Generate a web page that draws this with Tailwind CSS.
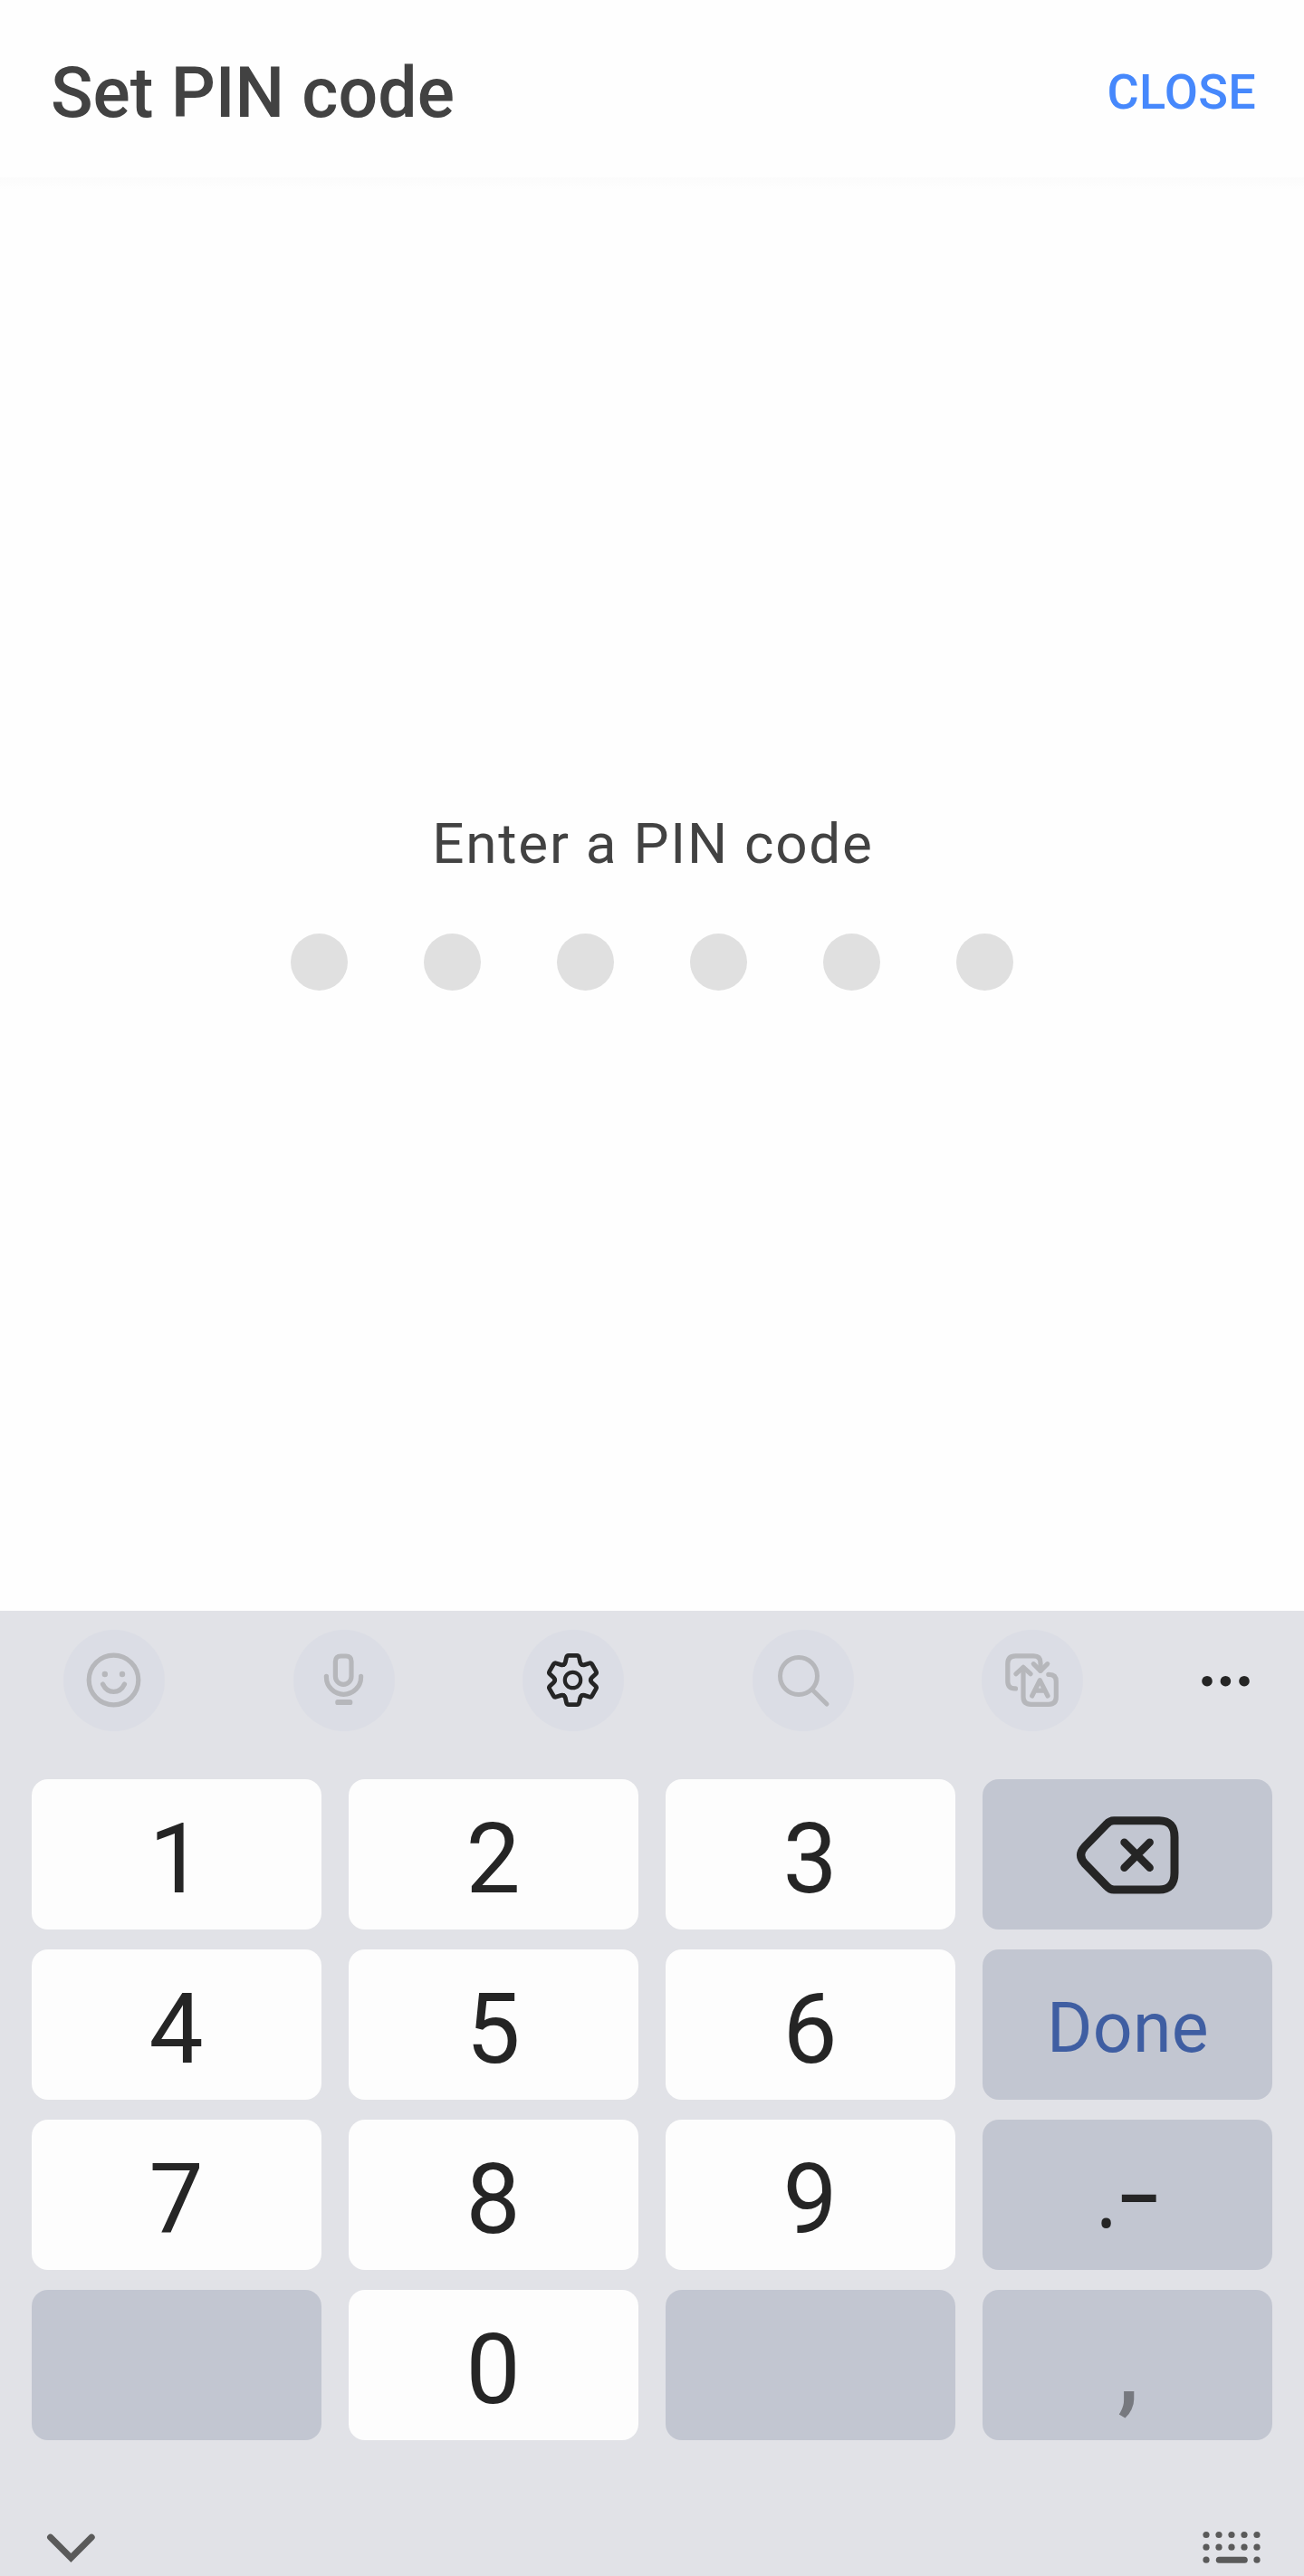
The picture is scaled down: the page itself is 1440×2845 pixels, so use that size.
<!DOCTYPE html>
<html lang="en">
<head>
  <meta charset="UTF-8">
  <meta name="viewport" content="width=device-width, initial-scale=1.0">
  <title>Set PIN code</title>
  <script src="https://cdn.jsdelivr.net/npm/@tailwindcss/browser@4"></script>
</head>
<body class="bg-[#fefefe] font-[Roboto,sans-serif] text-[#424242]">

  <div class="w-[1440px] h-[2845px] flex flex-col overflow-hidden">

    <!-- Header -->
    <header class="h-[196px] shrink-0 flex items-center justify-between pl-[56px] pr-[53px]">
      <h1 class="text-[77px] leading-none font-medium pt-[10px]">Set PIN code</h1>
      <button class="text-[54px] leading-none font-medium tracking-[0.3px] text-[#4688fc] pt-[7px]">CLOSE</button>
    </header>

    <!-- PIN entry -->
    <main class="h-[1583px] shrink-0 flex flex-col items-center pt-[705px] bg-[linear-gradient(#fbfbfb,#fefefe_14px)]">
      <p class="text-[62px] leading-none tracking-[1.75px] pl-[2px]">Enter a PIN code</p>
      <div class="flex gap-[84px] mt-[68px]">
        <span class="size-[63px] rounded-full bg-[#e0e0e0]"></span>
        <span class="size-[63px] rounded-full bg-[#e0e0e0]"></span>
        <span class="size-[63px] rounded-full bg-[#e0e0e0]"></span>
        <span class="size-[63px] rounded-full bg-[#e0e0e0]"></span>
        <span class="size-[63px] rounded-full bg-[#e0e0e0]"></span>
        <span class="size-[63px] rounded-full bg-[#e0e0e0]"></span>
      </div>
    </main>

    <!-- Keyboard -->
    <section class="flex-1 flex flex-col bg-[#e1e2e7] text-[#252525]">

      <!-- Toolbar -->
      <div class="h-[186px] shrink-0 flex items-start justify-between pt-[21px] pl-[70px] pr-[31px]">
        <div class="flex gap-[141.6px]">
          <svg class="size-[112px] rounded-full bg-[#dbdde5] text-[#b6b7bb]" viewBox="0 0 112 112" fill="none" stroke="currentColor" stroke-width="5.2" stroke-linecap="round">
            <circle cx="55.5" cy="55.5" r="27.3"/>
            <circle cx="45.8" cy="49" r="3.2" fill="currentColor" stroke="none"/>
            <circle cx="65" cy="49" r="3.2" fill="currentColor" stroke="none"/>
            <path d="M43.5 60Q47.5 68.3 55.5 68.3T67.5 60"/>
          </svg>
          <svg class="size-[112px] rounded-full bg-[#dbdde5] text-[#b6b7bb]" viewBox="0 0 112 112" fill="none" stroke="currentColor" stroke-width="5.2" stroke-linecap="round">
            <path d="M46.4 35Q46.4 29 52.4 29H58Q64 29 64 35V51.5A8.8 8.8 0 0 1 46.4 51.5Z"/>
            <path d="M36.4 51.3V52.2A19.1 19.1 0 0 0 74.6 52.2V51.3"/>
            <rect x="46.3" y="77" width="19" height="6" rx="2.6" fill="currentColor" stroke="none"/>
          </svg>
          <svg class="size-[112px] rounded-full bg-[#dbdde5]" viewBox="0 0 112 112" fill="none" stroke="currentColor" stroke-width="4.8" stroke-linecap="round">
            <defs>
              <path id="tooth" d="M-9.9 -17.1Q-8.6 -17.9 -8.2 -19.6L-7 -25Q-6.5 -27.1 -4.5 -27.1H4.5Q6.5 -27.1 7 -25L8.2 -19.6Q8.6 -17.9 9.9 -17.1"/>
            </defs>
            <g transform="translate(55.5 55.5)">
              <circle r="8.7" stroke-width="4.2"/>
              <use href="#tooth"/>
              <use href="#tooth" transform="rotate(60)"/>
              <use href="#tooth" transform="rotate(120)"/>
              <use href="#tooth" transform="rotate(180)"/>
              <use href="#tooth" transform="rotate(240)"/>
              <use href="#tooth" transform="rotate(300)"/>
            </g>
          </svg>
          <svg class="size-[112px] rounded-full bg-[#dbdde5] text-[#b6b7bb]" viewBox="0 0 112 112" fill="none" stroke="currentColor" stroke-width="5" stroke-linecap="round">
            <circle cx="51" cy="51" r="20.5"/>
            <path d="M66.3 66.5L82 82"/>
          </svg>
          <svg class="size-[112px] rounded-full bg-[#dbdde5] text-[#b6b7bb]" viewBox="0 0 112 112" fill="none" stroke="currentColor" stroke-width="5.2" stroke-linecap="round" stroke-linejoin="round">
            <path d="M37.5 64.9H36.5Q28.8 64.9 28.8 57V37.5Q28.8 28.9 37.5 28.9H57.5Q65 28.9 65 36.5V45"/>
            <path d="M57.3 37.7L65 45.3L72.7 37.7"/>
            <path d="M73.8 49.3H74.5Q82.3 49.3 82.3 57V74Q82.3 82.3 74 82.3H54.5Q46 82.3 46 74V42"/>
            <path d="M38 48.7L46 41.3L54 48.7"/>
            <path d="M55.7 73L64.3 55.6L73 73M59 67.2H69.6"/>
          </svg>
        </div>
        <svg class="size-[112px]" viewBox="0 0 112 112" fill="currentColor">
          <circle cx="36" cy="56.7" r="5.8"/>
          <circle cx="56.4" cy="56.7" r="5.8"/>
          <circle cx="77" cy="56.7" r="5.8"/>
        </svg>
      </div>

      <!-- Number pad -->
      <div class="grid grid-cols-4 auto-rows-[166px] gap-x-[30px] gap-y-[22px] px-[35px] text-[107px] leading-none">
        <button class="flex items-center justify-center pt-[10px] pr-[1px] rounded-[18px] bg-[#fdfdfd]">1</button>
        <button class="flex items-center justify-center pt-[10px] pr-[1px] rounded-[18px] bg-[#fdfdfd]">2</button>
        <button class="flex items-center justify-center pt-[10px] pr-[1px] rounded-[18px] bg-[#fdfdfd]">3</button>
        <button class="flex items-center justify-center pt-[2px] rounded-[18px] bg-[#c2c6d1]">
          <svg class="w-[114px] h-[86px]" viewBox="0 0 114 86" fill="none" stroke="currentColor" stroke-width="9" stroke-linecap="round" stroke-linejoin="round">
            <path d="M42 4.7H92Q109 4.7 109 23V62.5Q109 81 92 81H42Q37.5 81 34 77L9.7 52Q1.5 42.8 9.7 33.7L34 8.7Q37.5 4.7 42 4.7Z"/>
            <path d="M53.6 28.8L81.6 56.8M81.6 28.8L53.6 56.8" stroke-width="8.6"/>
          </svg>
        </button>

        <button class="flex items-center justify-center pt-[10px] pr-[1px] rounded-[18px] bg-[#fdfdfd]">4</button>
        <button class="flex items-center justify-center pt-[10px] pr-[1px] rounded-[18px] bg-[#fdfdfd]">5</button>
        <button class="flex items-center justify-center pt-[10px] pr-[1px] rounded-[18px] bg-[#fdfdfd]">6</button>
        <button class="flex items-center justify-center pt-[9px] pl-[1px] rounded-[18px] bg-[#c2c6d1] text-[77px] tracking-[0.3px] text-[#3f5ea2]">Done</button>

        <button class="flex items-center justify-center pt-[10px] pr-[1px] rounded-[18px] bg-[#fdfdfd]">7</button>
        <button class="flex items-center justify-center pt-[10px] pr-[1px] rounded-[18px] bg-[#fdfdfd]">8</button>
        <button class="flex items-center justify-center pt-[10px] pr-[1px] rounded-[18px] bg-[#fdfdfd]">9</button>
        <button class="flex items-center justify-center gap-[2px] pt-[2px] rounded-[18px] bg-[#c2c6d1] font-['Open_Sans',sans-serif] text-[90px]"><span>.</span><span class="pb-[16px] font-semibold">–</span></button>

        <button class="rounded-[18px] bg-[#c2c6d1]"></button>
        <button class="flex items-center justify-center pt-[10px] pr-[1px] rounded-[18px] bg-[#fdfdfd]">0</button>
        <button class="rounded-[18px] bg-[#c2c6d1]"></button>
        <button class="flex items-center justify-center pt-[9px] pl-[2px] rounded-[18px] bg-[#c2c6d1] font-medium text-[#77797f]">,</button>
      </div>

      <!-- Navigation row -->
      <div class="flex-1 flex justify-between items-start pt-[98px] pl-[48px] pr-[44px] text-[#5a5a5a]">
        <svg class="w-[60px] h-[44px]" viewBox="0 0 60 44" fill="none" stroke="currentColor" stroke-width="7.2" stroke-linecap="round">
          <path d="M7.7 9.3L30.4 32L53.1 9.3"/>
        </svg>
        <svg class="w-[72px] h-[44px]" viewBox="0 0 72 44" fill="currentColor">
          <circle cx="8" cy="6.5" r="3.6"/>
          <circle cx="22" cy="6.5" r="3.6"/>
          <circle cx="36" cy="6.5" r="3.6"/>
          <circle cx="50" cy="6.5" r="3.6"/>
          <circle cx="64" cy="6.5" r="3.6"/>
          <circle cx="8" cy="20.2" r="3.6"/>
          <circle cx="22" cy="20.2" r="3.6"/>
          <circle cx="36" cy="20.2" r="3.6"/>
          <circle cx="50" cy="20.2" r="3.6"/>
          <circle cx="64" cy="20.2" r="3.6"/>
          <circle cx="8" cy="34.2" r="3.6"/>
          <rect x="18.8" y="30.7" width="35" height="7.1" rx="3.5"/>
          <circle cx="64" cy="34.2" r="3.6"/>
        </svg>
      </div>
    </section>
  </div>

</body>
</html>
